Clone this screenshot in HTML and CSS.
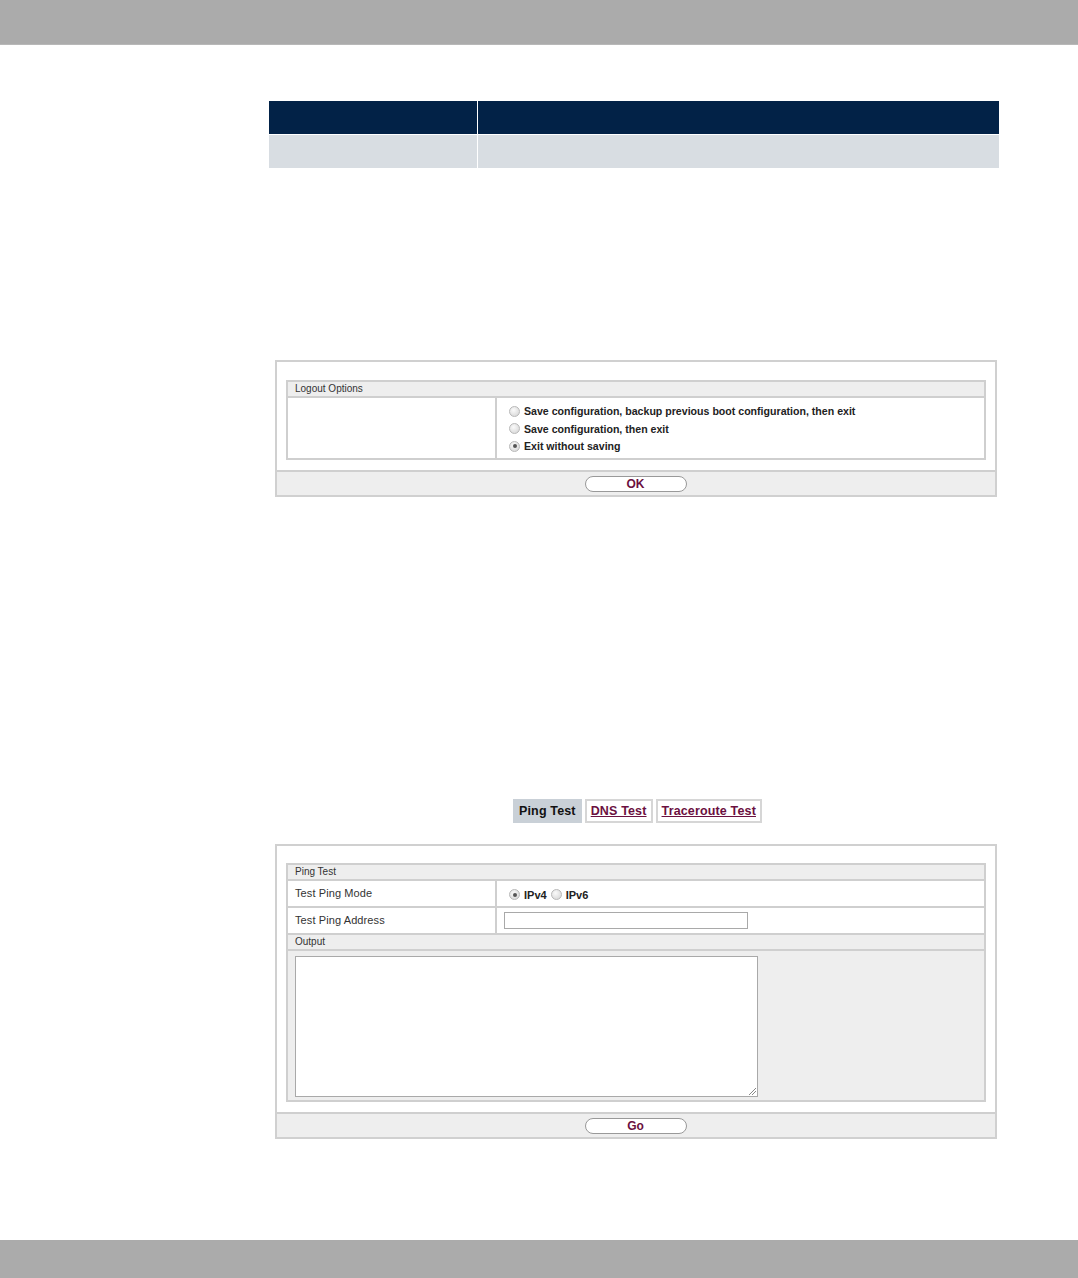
FILE: index.html
```html
<!DOCTYPE html>
<html>
<head>
<meta charset="utf-8">
<link rel="stylesheet" href="styles.css">
</head>
<body>
<div class="page">
  <div class="topbar"></div>
  <main class="content">
    <div class="navtable">
      <div class="nt-row nt-head">
        <div class="nt-c1"></div>
        <div class="nt-c2"></div>
      </div>
      <div class="nt-row nt-body">
        <div class="nt-c1"></div>
        <div class="nt-c2"></div>
      </div>
    </div>

    <div class="box logout">
      <div class="fs">
        <div class="fs-head">Logout Options</div>
        <div class="fs-row tall">
          <div class="fs-label"></div>
          <div class="fs-value radios">
            <div class="opt"><span class="radio"></span><span class="optlabel">Save configuration, backup previous boot configuration, then exit</span></div>
            <div class="opt"><span class="radio"></span><span class="optlabel">Save configuration, then exit</span></div>
            <div class="opt"><span class="radio checked"></span><span class="optlabel">Exit without saving</span></div>
          </div>
        </div>
      </div>
      <div class="box-foot"><span class="btn">OK</span></div>
    </div>

    <div class="tabs">
      <span class="tab active">Ping Test</span>
      <a class="tab" href="#">DNS Test</a>
      <a class="tab" href="#">Traceroute Test</a>
    </div>

    <div class="box ping">
      <div class="fs">
        <div class="fs-head">Ping Test</div>
        <div class="fs-row">
          <div class="fs-label">Test Ping Mode</div>
          <div class="fs-value inline">
            <span class="radio checked"></span><span class="optlabel">IPv4</span>
            <span class="radio"></span><span class="optlabel">IPv6</span>
          </div>
        </div>
        <div class="fs-row">
          <div class="fs-label">Test Ping Address</div>
          <div class="fs-value"><span class="textinput"></span></div>
        </div>
        <div class="fs-head">Output</div>
        <div class="output">
          <div class="textarea"><span class="grip"></span></div>
        </div>
      </div>
      <div class="box-foot"><span class="btn">Go</span></div>
    </div>
  </main>
  <div class="bottombar"></div>
</div>
</body>
</html>
```

FILE: styles.css
```css
html, body {
  margin: 0;
  padding: 0;
  background: #ffffff;
}
.page {
  height: 1278px;
  display: flex;
  flex-direction: column;
  font-family: "Liberation Sans", Arial, sans-serif;
  color: #222;
}
.topbar {
  height: 44px;
  background: #ababab;
  border-bottom: 1px solid #b8b8b8;
  flex: none;
}
.bottombar {
  margin-top: auto;
  height: 38px;
  background: #ababab;
  flex: none;
}
.content {
  display: flex;
  flex-direction: column;
  padding-left: 269px;
}

/* top navy table */
.navtable {
  margin-top: 56px;
  width: 730px;
}
.nt-row {
  display: flex;
  gap: 1px;
}
.nt-c1 { width: 208px; }
.nt-c2 { flex: 1; }
.nt-head { height: 33px; }
.nt-head .nt-c1, .nt-head .nt-c2 { background: #022247; }
.nt-body { height: 33px; margin-top: 1px; }
.nt-body .nt-c1, .nt-body .nt-c2 { background: #d8dde2; }

/* boxes */
.box {
  margin-left: 6px;
  width: 718px;
  border: 2px solid #d0d0d0;
  background: #fff;
  display: flex;
  flex-direction: column;
}
.logout { margin-top: 192px; }
.ping { margin-top: 21px; }
.fs {
  margin: 18px 9px 10px 9px;
  border: 2px solid #cfcfcf;
  display: flex;
  flex-direction: column;
}
.ping .fs { margin-top: 17px; margin-bottom: 10px; }
.fs-head {
  height: 14px;
  line-height: 14px;
  background: #eeeeee;
  border-bottom: 2px solid #cfcfcf;
  font-size: 10px;
  color: #333;
  padding-left: 7px;
}
.fs-row {
  display: flex;
  border-bottom: 2px solid #cfcfcf;
  min-height: 25px;
}
.fs-row.tall { border-bottom: 0; height: 60px; }
.fs-label {
  flex: none;
  border-right: 2px solid #cfcfcf;
  font-size: 11px;
  letter-spacing: 0.1px;
  color: #333;
  padding-left: 7px;
  line-height: 24px;
  box-sizing: border-box;
  width: 209px;
}
.fs-value {
  flex: 1;
  padding-left: 12px;
  display: flex;
  align-items: center;
}
.radios {
  flex-direction: column;
  align-items: flex-start;
  justify-content: center;
  gap: 5.5px;
  padding-top: 1px;
}
.opt {
  display: flex;
  align-items: center;
  height: 12px;
}
.radio {
  width: 9px;
  height: 9px;
  border: 1px solid #b8b8b8;
  border-radius: 50%;
  background: radial-gradient(circle at 40% 35%, #fafafa 0%, #dedede 70%, #cfcfcf 100%);
  display: inline-block;
  flex: none;
  position: relative;
  margin-right: 4px;
}
.radio.checked::after {
  content: "";
  position: absolute;
  left: 2.5px;
  top: 2.5px;
  width: 4px;
  height: 4px;
  border-radius: 50%;
  background: #555;
}
.optlabel {
  font-size: 10.6px;
  font-weight: bold;
  color: #222;
}
.inline { padding-top: 2px; }
.inline .optlabel { margin-right: 4px; font-size: 11px; }
.textinput {
  display: block;
  width: 242px;
  height: 15px;
  border: 1px solid #a9a9a9;
  background: #fff;
  margin-left: -5px;
}
.output {
  background: #eeeeee;
  padding: 5px 8px 3px 7px;
}
.textarea {
  width: 461px;
  height: 139px;
  border: 1px solid #a9a9a9;
  background: #fff;
  position: relative;
}
.grip {
  position: absolute;
  right: 1px;
  bottom: 1px;
  width: 7px;
  height: 7px;
  background: linear-gradient(135deg, transparent 0 45%, #888 45% 52%, transparent 52% 70%, #888 70% 77%, transparent 77%);
}
.box-foot {
  border-top: 2px solid #cfcfcf;
  background: #eeeeee;
  height: 23px;
  display: flex;
  justify-content: center;
  align-items: center;
}
.btn {
  width: 100px;
  height: 14px;
  border: 1px solid #999;
  border-radius: 8px;
  background: #fff;
  font-size: 12px;
  font-weight: bold;
  color: #6b1040;
  text-align: center;
  line-height: 14px;
  margin-left: -1px;
}

/* tabs */
.tabs {
  margin-top: 302px;
  margin-left: 244px;
  display: flex;
  gap: 3px;
  height: 24px;
}
.tab {
  box-sizing: border-box;
  height: 24px;
  line-height: 20px;
  padding: 0 4px;
  border: 2px solid #d6d6d6;
  font-size: 12.5px;
  letter-spacing: 0.15px;
  font-weight: bold;
  color: #6b1040;
  text-decoration: underline;
  background: #fff;
}
.tab.active {
  background: #c9d0d7;
  border-color: #c9d0d7;
  color: #111;
  text-decoration: none;
  padding: 0 4px;
}
```
